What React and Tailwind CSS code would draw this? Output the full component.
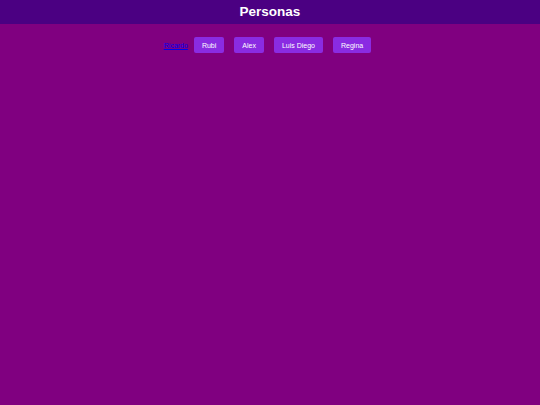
export default function App() {
  return (
    <div className="min-h-[405px] w-full bg-[#800080]" style={{ fontFamily: '"Liberation Sans", Arial, sans-serif' }}>
      <header className="h-[24px] bg-[#4b0082] flex items-center justify-center">
        <h1 className="text-white font-bold text-[13.5px] leading-none">Personas</h1>
      </header>
      <nav className="flex justify-center items-center mt-[13px]">
        <a href="#" className="text-[7px] text-[#0000ee] underline mr-px leading-none">Ricardo</a>
        <button className="mx-[5px] px-2 h-[16px] text-[7px] leading-none text-white bg-[#8a2be2] rounded-[2px]">Rubi</button>
        <button className="mx-[5px] px-2 h-[16px] text-[7px] leading-none text-white bg-[#8a2be2] rounded-[2px]">Alex</button>
        <button className="mx-[5px] px-2 h-[16px] text-[7px] leading-none text-white bg-[#8a2be2] rounded-[2px]">Luis Diego</button>
        <button className="mx-[5px] px-2 h-[16px] text-[7px] leading-none text-white bg-[#8a2be2] rounded-[2px]">Regina</button>
      </nav>
    </div>
  );
}
